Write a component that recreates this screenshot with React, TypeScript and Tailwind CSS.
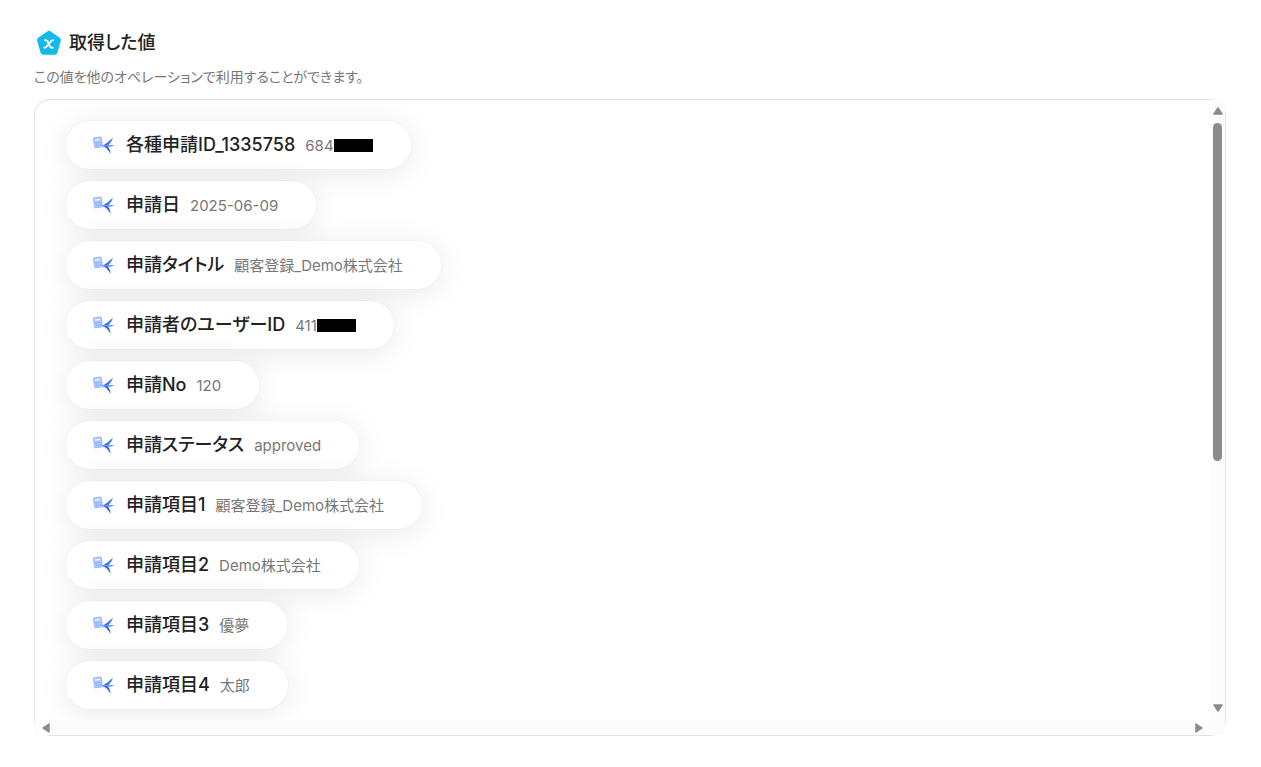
interface RetrievedValue {
    label: string;
    value: string;
    masked?: boolean;
}

const values: RetrievedValue[] = [
    { label: '各種申請ID_1335758', value: '684', masked: true },
    { label: '申請日', value: '2025-06-09' },
    { label: '申請タイトル', value: '顧客登録_Demo株式会社' },
    { label: '申請者のユーザーID', value: '411', masked: true },
    { label: '申請No', value: '120' },
    { label: '申請ステータス', value: 'approved' },
    { label: '申請項目1', value: '顧客登録_Demo株式会社' },
    { label: '申請項目2', value: 'Demo株式会社' },
    { label: '申請項目3', value: '優夢' },
    { label: '申請項目4', value: '太郎' },
];

function PentagonIcon() {
    return (
        <svg viewBox="0 0 28 28" className="size-7" aria-hidden="true">
            <path
                d="M12.6 2.3a2.6 2.6 0 0 1 2.8 0l9.4 6.5a2.6 2.6 0 0 1 1 2.9l-3.4 12.1a2.6 2.6 0 0 1-2.5 1.9H8.1a2.6 2.6 0 0 1-2.5-1.9L2.2 11.7a2.6 2.6 0 0 1 1-2.9z"
                fill="#12b9ea"
            />
            <path
                d="M10 11.2h.9c.9 0 1.3.4 1.7 1.2l2.4 5.1c.4.8.8 1.2 1.7 1.2h1.1M18.2 11.1c-1.1 0-1.7.4-2.3 1.2l-4.3 5.2c-.6.8-1.1 1.2-2.2 1.2"
                fill="none"
                stroke="#fff"
                strokeWidth="1.9"
                strokeLinecap="round"
            />
        </svg>
    );
}

function WorkflowIcon() {
    return (
        <svg viewBox="0 0 22 20" className="h-5 w-[22px] shrink-0" aria-hidden="true">
            <g transform="rotate(-9 5 7)">
                <rect x="1" y="2.4" width="7.8" height="10" rx="0.6" fill="#b3ccff" stroke="#8fb2fc" strokeWidth="0.9" />
                <path d="M2.4 4.6h5" stroke="#eff5ff" strokeWidth="1.3" />
                <path
                    d="M2.3 7.6h1.3M4.3 7.6h1.3M6.3 7.6h1.3M2.300 10.200h1.300M4.300 10.200h1.300M6.300 10.200h1.300"
                    stroke="#7ba4fb"
                    strokeWidth="1.3"
                />
            </g>
            <path d="M9.2 10.8C13 9.2 15.8 6.4 20 2.8c-1.2 3.5-3.2 6-5.6 8z" fill="#3470f5" />
            <path d="M9.2 10.8c2.6-.7 7-1 12.4-.5-2.6 1.5-6 1.9-8.2 1.6z" fill="#6d9afa" />
            <path d="M9.2 10.8l5.4.6c1.7 1.5 2.7 3.8 3 7.2-1.5-2.1-3.4-5.2-5.2-6.2z" fill="#2563eb" />
        </svg>
    );
}

function ValuePill({ label, value, masked }: RetrievedValue) {
    return (
        <li className="flex h-12 w-fit items-center rounded-full bg-white pl-[27px] pr-[38px] shadow-[0_0_0_1px_rgba(0,0,0,0.02),0_4px_32px_rgba(0,0,0,0.09)]">
            <WorkflowIcon />
            <span className="ml-[11px] flex items-baseline gap-[10px] whitespace-nowrap leading-6">
                <span className="text-[18px] font-medium text-[#222]">{label}</span>
                <span className="text-[15px] text-[#777]">
                    {value}
                    {masked && <span className="inline-block h-[13px] w-[39px] bg-black align-[-1px]" />}
                </span>
            </span>
        </li>
    );
}

function Arrow({ d }: { d: string }) {
    return (
        <svg viewBox="0 0 10 10" className="size-[10px] shrink-0" aria-hidden="true">
            <path d={d} fill="#8b8b8b" stroke="#8b8b8b" strokeWidth="1.5" strokeLinejoin="round" />
        </svg>
    );
}

export default function App() {
    return (
        <main
            lang="ja"
            className="flex h-screen flex-col bg-white pb-[31px] pl-[34px] pr-[35px] pt-[29px] font-['Inter','Noto_Sans_CJK_JP',sans-serif] [font-feature-settings:'palt']"
        >
            <header>
                <div className="flex items-center gap-[6px] pl-px">
                    <PentagonIcon />
                    <h1 className="text-[18px] font-medium leading-7 text-[#222]">取得した値</h1>
                </div>
                <p className="mt-[10px] text-[14px] leading-5 text-[#777]">
                    この値を他のオペレーションで利用することができます。
                </p>
            </header>

            {/* The square scrollbar tracks cover the rounded corners they reach */}
            <section className="mt-3 grid min-h-0 flex-1 grid-cols-[1fr_15px] grid-rows-[1fr_15px] rounded-2xl border border-[#e3e3e3]">
                <ul className="flex min-h-0 flex-col gap-3 overflow-hidden rounded-tl-2xl pl-[31px] pt-[21px]">
                    {values.map((item) => (
                        <ValuePill key={item.label} {...item} />
                    ))}
                </ul>

                {/* Vertical scrollbar */}
                <div className="flex min-h-0 flex-col items-center bg-[#fcfcfc] pb-[7px] pt-[6px]">
                    <Arrow d="M5 2L9 8H1z" />
                    <div className="mt-[7px] min-h-0 w-full flex-1 px-[3px]">
                        <div className="h-7/12 rounded-full bg-[#8b8b8b]" />
                    </div>
                    <Arrow d="M5 8L9 2H1z" />
                </div>

                {/* Horizontal scrollbar */}
                <div className="flex items-center justify-between bg-[#fcfcfc] px-[6px]">
                    <Arrow d="M2 5L8 1V9z" />
                    <Arrow d="M8 5L2 1V9z" />
                </div>
                <div className="bg-[#fcfcfc]" />
            </section>
        </main>
    );
}
